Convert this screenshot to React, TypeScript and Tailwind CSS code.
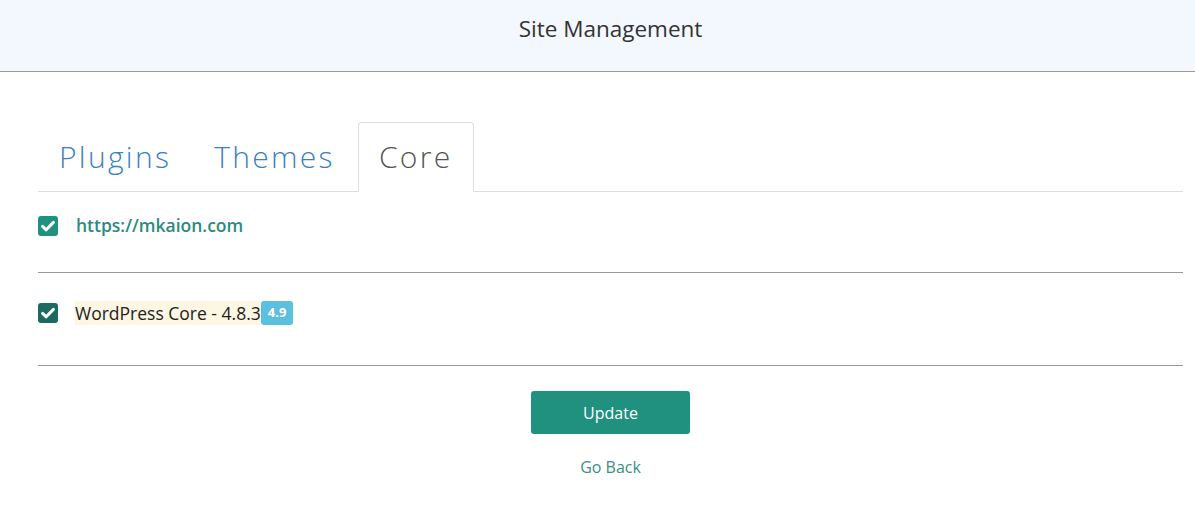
import React from "react";

function Check({ color }: { color: string }) {
  return (
    <span
      className="flex h-[20px] w-[20px] shrink-0 items-center justify-center rounded-[3px]"
      style={{ backgroundColor: color }}
    >
      <svg width="20" height="20" viewBox="0 0 20 20" fill="none">
        <path d="M4.6 10.4 L8.2 13.8 L15.4 6.4" stroke="white" strokeWidth="3" strokeLinecap="round" strokeLinejoin="round" />
      </svg>
    </span>
  );
}

export default function App() {
  const font = { fontFamily: '"Open Sans", "Noto Sans", sans-serif' };
  return (
    <div className="min-h-[507px] w-full bg-white" style={font}>
      <header className="flex h-[72px] items-start justify-center border-b border-[#999999] bg-[#f3f7fe] pl-[38px] pr-[12px] pt-[12px]">
        <h1 className="text-[22.5px] font-normal text-[#333333]">Site Management</h1>
      </header>
      <div className="pl-[38px] pr-[12px] pt-[50px]">
        <div className="flex border-b border-[#dddddd]">
          <div className="-mb-px flex h-[70px] items-center border border-transparent px-[20px] pb-[2px] text-[30px] font-light tracking-[2.3px] text-[#3b7fc1]">
            Plugins
          </div>
          <div className="-mb-px ml-[1px] flex h-[70px] items-center border border-transparent px-[20px] pb-[2px] text-[30px] font-light tracking-[2.3px] text-[#3b7fc1]">
            Themes
          </div>
          <div className="-mb-px ml-[2px] flex h-[70px] items-center rounded-t-[4px] border border-[#dddddd] border-b-white bg-white pl-[20px] pr-[21px] pb-[2px] text-[30px] font-light tracking-[2.3px] text-[#555555]">
            Core
          </div>
        </div>
        <div className="h-[81px] border-b border-[#999999] pt-[24px]">
          <div className="flex h-[20px] items-center">
            <Check color="#21917f" />
            <span className="ml-[18px] pb-[2px] text-[17.5px] font-semibold text-[#2a8c7e]">https://mkaion.com</span>
          </div>
        </div>
        <div className="h-[93px] border-b border-[#999999] pt-[30px]">
          <div className="flex h-[20px] items-center">
            <Check color="#1b6b62" />
            <span className="ml-[17px] flex h-[24px] items-center bg-[#fcf6e2] text-[17.5px] text-[#222222]">
              WordPress Core - 4.8.3
            </span>
            <span className="flex h-[24px] items-center rounded-[3px] bg-[#5bc0de] px-[7px] text-[13px] font-bold text-white">
              4.9
            </span>
          </div>
        </div>
        <div className="flex flex-col items-center pt-[25px]">
          <button className="h-[43px] w-[159px] rounded-[3px] bg-[#20907f] text-[16px] text-white">Update</button>
          <a className="mt-[21px] text-[16px] text-[#3a8f85]">Go Back</a>
        </div>
      </div>
    </div>
  );
}
